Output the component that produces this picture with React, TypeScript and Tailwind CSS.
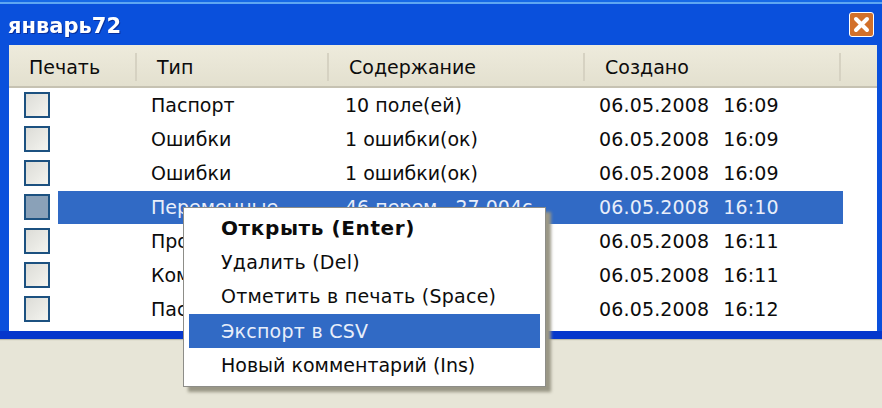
const rows = [
  { id: 1, type: "Паспорт", text: "10 поле(ей)", date: "06.05.2008", time: "16:09" },
  { id: 2, type: "Ошибки", text: "1 ошибки(ок)", date: "06.05.2008", time: "16:09" },
  { id: 3, type: "Ошибки", text: "1 ошибки(ок)", date: "06.05.2008", time: "16:09" },
  { id: 4, type: "Переменные", text: "46 перем., 27 004с", date: "06.05.2008", time: "16:10", selected: true },
  { id: 5, type: "Про", text: "", date: "06.05.2008", time: "16:11" },
  { id: 6, type: "Ком", text: "", date: "06.05.2008", time: "16:11" },
  { id: 7, type: "Пас", text: "", date: "06.05.2008", time: "16:12" },
];

const headers = [
  { label: "Печать", width: "w-[128px]" },
  { label: "Тип", width: "w-[192px]" },
  { label: "Содержание", width: "w-[256px]" },
  { label: "Создано", width: "w-[256px]" },
];

function ContextMenu() {
  return (
    <div className="absolute left-[183px] top-[207px] w-[363px] h-[180px] bg-white border border-[#8d8d88] px-[5px] pt-[3px] shadow-[5px_5px_3px_#9a9786] text-[19px] text-[#0c0c0c] tracking-[0.25px]">
      <div className="h-[34px] pl-[32px] flex items-center font-bold text-[20px] tracking-[0.6px]">Открыть (Enter)</div>
      <div className="h-[34px] pl-[32px] flex items-center">Удалить (Del)</div>
      <div className="h-[34px] pl-[32px] flex items-center">Отметить в печать (Space)</div>
      <div className="h-[34px] mt-[1px] pl-[32px] flex items-center bg-[#316ac5] text-[#e8eefa]">Экспорт в CSV</div>
      <div className="h-[34px] pl-[32px] flex items-center tracking-normal">Новый комментарий (Ins)</div>
    </div>
  );
}

export default function App() {
  return (
    <div className="relative w-[882px] h-[408px] overflow-hidden bg-[#e7e5d7] font-['DejaVu_Sans',sans-serif]">
      <div className="h-[339px] flex flex-col bg-[#0a50dc] border-b-[8px] border-b-[#0537cc] shadow-[0_1px_1px_#bdbbaa]">
        <div className="h-[2px] bg-[#1668e6] shrink-0" />
        <div className="h-[2px] bg-[#5ea6f2] shrink-0" />
        <div className="h-[41px] flex items-center justify-between px-[8px] shrink-0">
          <span className="text-white font-bold text-[21px] mt-[4px] drop-shadow-[1px_1px_0_#0a2f9a]">
            январь72
          </span>
          <div className="w-[25px] h-[25px] rounded-[3px] border-[1.5px] border-white bg-[#d2702a] flex items-center justify-center">
            <svg width="17" height="17" viewBox="0 0 17 17">
              <path d="M3 3 L14 14 M14 3 L3 14" stroke="#fff" strokeWidth="4" strokeLinecap="round" />
            </svg>
          </div>
        </div>
        <div className="ml-[9px] mr-[5px] flex-1 bg-white flex flex-col">
          <div className="h-[43px] flex bg-gradient-to-b from-[#eeebdc] to-[#e3e0cf] border-b-[2px] border-[#c6c2b2] text-[19px] text-[#0c0c0c] shrink-0 pt-[3px]">
            {headers.map((h) => (
              <div key={h.label} className={`${h.width} pl-[20px] flex items-center border-r-2 border-[#d6d2c2] my-[5px]`}>
                {h.label}
              </div>
            ))}
          </div>
          <div className="flex flex-col">
            {rows.map((r) => (
              <div key={r.id} className="h-[34px] flex items-center pl-[15px]">
                <div
                  className={`w-[26px] h-[26px] border-2 border-[#1c5180] shrink-0 ${
                    r.selected ? "bg-[#8aa1b8]" : "bg-gradient-to-br from-[#dcdcd7] to-[#f4f4ef]"
                  }`}
                />
                <div
                  className={`ml-[8px] w-[785px] h-[33px] flex items-center text-[19px] pt-[1px] ${
                    r.selected ? "bg-[#316ac5] text-[#e8eefa]" : "text-[#0c0c0c]"
                  }`}
                >
                  <div className="w-[93px]" />
                  <div className="w-[194px] whitespace-nowrap">{r.type}</div>
                  <div className="w-[255px] whitespace-nowrap">{r.text}</div>
                  <div className="whitespace-nowrap flex gap-[14px] tracking-[0.15px] ml-[-1px]">
                    <span>{r.date}</span>
                    <span>{r.time}</span>
                  </div>
                </div>
              </div>
            ))}
          </div>
        </div>
      </div>
      <ContextMenu />
    </div>
  );
}
